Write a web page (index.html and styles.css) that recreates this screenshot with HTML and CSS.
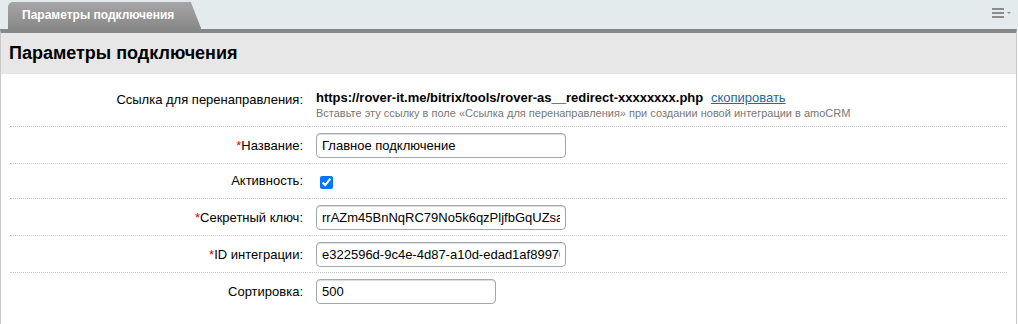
FILE: index.html
```html
<!DOCTYPE html>
<html lang="ru">
<head>
    <meta charset="UTF-8">
    <title>Параметры подключения</title>
    <link rel="stylesheet" href="styles.css">
</head>
<body>
    <div class="tabs">
        <div class="tab">Параметры подключения</div>
        <div class="tabs-menu">
            <svg width="20" height="12" viewBox="0 0 20 12">
                <rect x="0" y="0" width="12" height="2" fill="#8c8c8c"/>
                <rect x="0" y="4" width="12" height="2" fill="#8c8c8c"/>
                <rect x="0" y="8" width="12" height="2" fill="#8c8c8c"/>
                <polygon points="15,4 19,4 17,6" fill="#8c8c8c"/>
            </svg>
        </div>
    </div>

    <div class="panel">
        <div class="panel-title">Параметры подключения</div>
        <table class="form">
            <tr class="row-link">
                <td class="label">Ссылка для перенаправления:</td>
                <td class="value">
                    <div class="url"><b>https://rover-it.me/bitrix/tools/rover-as__redirect-xxxxxxxx.php</b> <a href="#">скопировать</a></div>
                    <div class="hint">Вставьте эту ссылку в поле «Ссылка для перенаправления» при создании новой интеграции в amoCRM</div>
                </td>
            </tr>
            <tr>
                <td class="label"><span class="req">*</span>Название:</td>
                <td class="value"><input class="field" type="text" value="Главное подключение"></td>
            </tr>
            <tr class="row-check">
                <td class="label">Активность:</td>
                <td class="value"><input type="checkbox" checked></td>
            </tr>
            <tr>
                <td class="label"><span class="req">*</span>Секретный ключ:</td>
                <td class="value"><input class="field" type="text" value="rrAZm45BnNqRC79No5k6qzPljfbGqUZsaKx1"></td>
            </tr>
            <tr>
                <td class="label"><span class="req">*</span>ID интеграции:</td>
                <td class="value"><input class="field" type="text" value="e322596d-9c4e-4d87-a10d-edad1af89970"></td>
            </tr>
            <tr>
                <td class="label">Сортировка:</td>
                <td class="value"><input class="field short" type="text" value="500"></td>
            </tr>
        </table>
    </div>
</body>
</html>
```

FILE: styles.css
```css
body {
    margin: 0;
    font-family: "Liberation Sans", Arial, sans-serif;
    font-size: 13px;
    color: #000;
    background: #fff;
}
.tabs {
    display: flex;
    align-items: flex-end;
    justify-content: space-between;
    height: 29px;
    background: #e4ebed;
}
.tab {
    position: relative;
    height: 27px;
    line-height: 27px;
    margin-left: 8px;
    padding: 0 14px;
    font-size: 12px;
    font-weight: bold;
    color: #fff;
    background: linear-gradient(#a6a6a6, #888);
    border-radius: 5px 0 0 0;
}
.tab::after {
    content: '';
    position: absolute;
    top: 0;
    right: -13px;
    width: 14px;
    height: 100%;
    background: linear-gradient(#a6a6a6, #888);
    clip-path: polygon(0 0, 25% 0, 100% 100%, 0 100%);
}
.tabs-menu {
    align-self: flex-start;
    padding: 8px 6px 0 0;
}
.tabs-menu svg {
    display: block;
}
.panel {
    margin-right: 1px;
    border-top: 4px solid #878787;
    border-left: 1px solid #c8c8c8;
    border-right: 1px solid #c8c8c8;
    border-bottom: 2px solid #cfcfcf;
}
.panel-title {
    height: 41px;
    line-height: 41px;
    padding-left: 8px;
    background: #e7e7e7;
    font-size: 18px;
    font-weight: bold;
}
.form {
    width: calc(100% - 18px);
    margin: 0 9px 15px;
    border-collapse: collapse;
}
.form td {
    padding-top: 6px;
    padding-bottom: 5px;
    border-top: 1px dotted #c9c9c9;
    vertical-align: middle;
}
.form td.label {
    width: 293px;
    padding-left: 0;
    padding-right: 7px;
    text-align: right;
    line-height: 18px;
}
.form td.value {
    padding-left: 6px;
    padding-right: 0;
}
.row-link td {
    border-top: none;
    padding-top: 16px;
    padding-bottom: 6px;
}
.row-link td.label {
    vertical-align: top;
    padding-top: 17px;
}
.row-check td {
    padding-top: 8px;
    padding-bottom: 8px;
}
.row-check input {
    margin: 0 0 0 4px;
    vertical-align: middle;
}
.url {
    line-height: 16px;
}
.url a {
    margin-left: 4px;
    color: #2067b0;
    font-weight: normal;
}
.hint {
    font-size: 11px;
    line-height: 14px;
    color: #777;
}
.req {
    color: #e00;
}
.field {
    box-sizing: border-box;
    display: block;
    width: 250px;
    height: 25px;
    padding: 0 5px;
    font-family: "Liberation Sans", Arial, sans-serif;
    font-size: 13px;
    color: #000;
    border: 1px solid #a2a8ab;
    border-radius: 4px;
    box-shadow: inset 0 1px 1px rgba(160, 168, 171, 0.4);
    outline: none;
}
.field.short {
    width: 180px;
}
```
